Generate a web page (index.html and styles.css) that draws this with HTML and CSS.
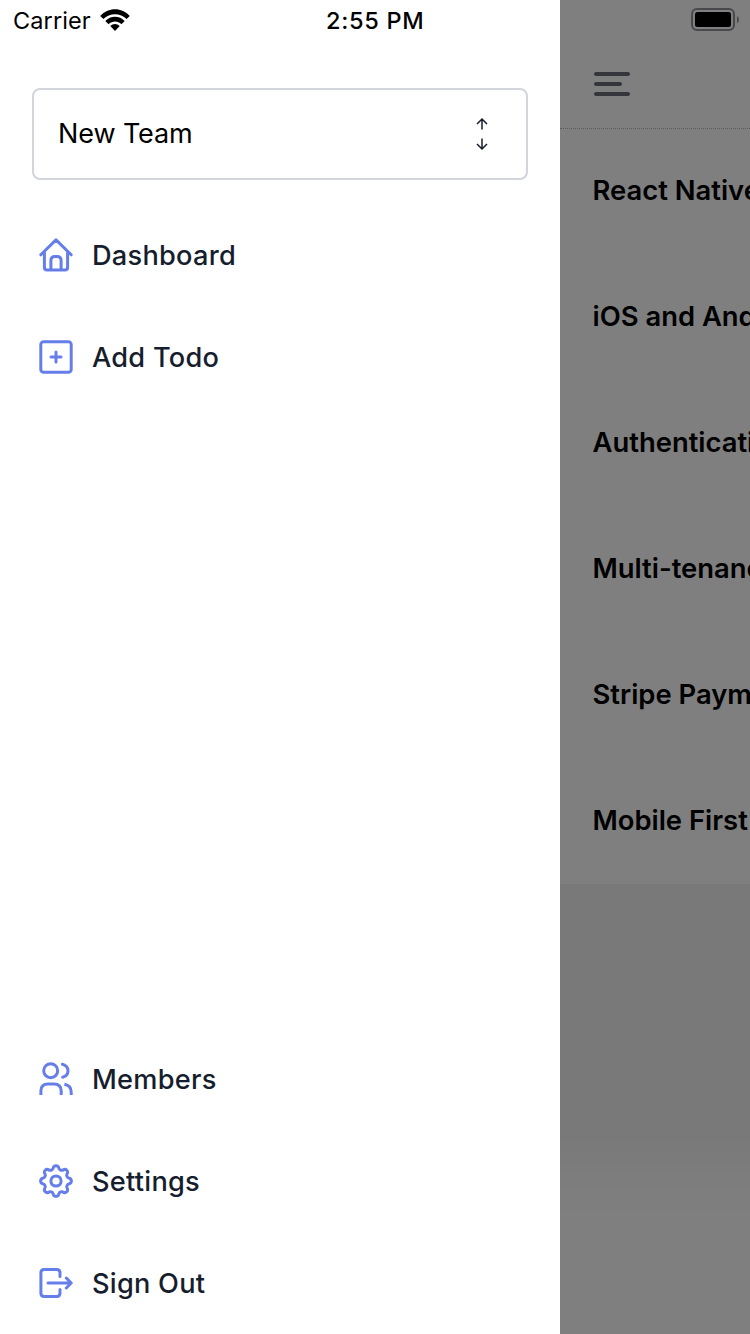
FILE: index.html
```html
<!DOCTYPE html>
<html lang="en">
<head>
    <meta charset="UTF-8">
    <meta name="viewport" content="width=device-width, initial-scale=1.0">
    <title>Dashboard</title>
    <link rel="stylesheet" href="styles.css">
</head>
<body>
    <div class="app">
        <aside class="drawer">
            <div class="status-bar">
                <span class="carrier">Carrier</span>
                <svg class="wifi" width="30" height="22" viewBox="0 0 30 22">
                    <path d="M0.2 7C8 -2 22 -2 29.8 7L26.6 10.1C20.4 3.5 9.6 3.5 3.4 10.1Z"/>
                    <path d="M5.3 12C10.4 6.2 19.6 6.2 24.7 12L21.4 15.2C18 11.5 12 11.5 8.6 15.2Z"/>
                    <path d="M10.3 17C13 14.2 17 14.2 19.7 17L15 21.9Z"/>
                </svg>
                <span class="time">2:55 PM</span>
            </div>

            <div class="team-select">
                <span class="team-name">New Team</span>
                <svg width="16" height="34" viewBox="0 0 16 34">
                    <path d="M8 12.5V2.5M3 7L8 2L13 7M8 21.5V31.5M3 27L8 32L13 27"/>
                </svg>
            </div>

            <nav class="menu">
                <a class="menu-item">
                    <svg class="icon" viewBox="0 0 40 40">
                        <path d="M4.8 19.8L20 4.9L35.2 19.8M8.4 17V32.2Q8.4 35 11.2 35H28.8Q31.6 35 31.6 32.2V17M14.9 35V25.6Q14.9 21.6 18.9 21.6H21.1Q25.1 21.6 25.1 25.6V35"/>
                    </svg>
                    <span>Dashboard</span>
                </a>
                <a class="menu-item">
                    <svg class="icon" viewBox="0 0 40 40">
                        <rect x="4.8" y="4.8" width="30.4" height="30.4" rx="2.8"/>
                        <path d="M20 15V25M15 20H25"/>
                    </svg>
                    <span>Add Todo</span>
                </a>
            </nav>

            <nav class="menu menu-bottom">
                <a class="menu-item">
                    <svg class="icon" viewBox="0 0 40 40">
                        <circle cx="14.7" cy="11.7" r="7"/>
                        <path class="flat" d="M4.9 36V32Q4.9 25 12 25H18Q25.2 25 25.2 32V36"/>
                        <path d="M26.4 5.2C33.8 7.2 33.8 16.2 26.6 18.2"/>
                        <path class="flat" d="M28.4 25.3Q35.2 26.6 35.2 33V36"/>
                    </svg>
                    <span>Members</span>
                </a>
                <a class="menu-item">
                    <svg class="icon" viewBox="0 0 40 40">
                        <circle cx="20" cy="20" r="5.1"/>
                        <path d="M33.3 17.3A2.8 2.8 0 0 1 33.3 22.7A3.1 3.1 0 0 0 31.3 27.55A2.8 2.8 0 0 1 27.55 31.3A3.1 3.1 0 0 0 22.7 33.3A2.8 2.8 0 0 1 17.3 33.3A3.1 3.1 0 0 0 12.45 31.3A2.8 2.8 0 0 1 8.7 27.55A3.1 3.1 0 0 0 6.7 22.7A2.8 2.8 0 0 1 6.7 17.3A3.1 3.1 0 0 0 8.7 12.45A2.8 2.8 0 0 1 12.45 8.7A3.1 3.1 0 0 0 17.3 6.7A2.8 2.8 0 0 1 22.7 6.7A3.1 3.1 0 0 0 27.55 8.7A2.8 2.8 0 0 1 31.3 12.45A3.1 3.1 0 0 0 33.3 17.3Z"/>
                    </svg>
                    <span>Settings</span>
                </a>
                <a class="menu-item">
                    <svg class="icon" viewBox="0 0 40 40">
                        <path d="M24 13.5V9.8Q24 6.5 20.7 6.5H8.2Q4.9 6.5 4.9 9.8V30.2Q4.9 33.5 8.2 33.5H20.7Q24 33.5 24 30.2V26.5M12 20H35M30.3 15L35.2 20L30.3 25"/>
                    </svg>
                    <span>Sign Out</span>
                </a>
            </nav>
        </aside>

        <main class="screen">
            <header class="screen-header">
                <svg class="battery" width="48" height="24" viewBox="0 0 48 24">
                    <rect class="battery-case" x="1" y="1" width="42" height="21" rx="5"/>
                    <rect x="4" y="4" width="36" height="15" rx="2.5"/>
                    <path class="battery-tip" d="M46 8Q48 9 48 11.5Q48 14 46 15Z"/>
                </svg>
                <svg class="hamburger" width="36" height="24" viewBox="0 0 36 24">
                    <path d="M2 2H34M2 12H26M2 22H34"/>
                </svg>
            </header>
            <ul class="todos">
                <li>React Native</li>
                <li>iOS and Android</li>
                <li>Authentication</li>
                <li>Multi-tenancy</li>
                <li>Stripe Payments</li>
                <li>Mobile First</li>
            </ul>
            <div class="overlay"></div>
        </main>
    </div>
</body>
</html>
```
FILE: styles.css
```css
body {
    margin: 0;
    font-family: Inter, "Liberation Sans", sans-serif;
    color: #161e2e;
}
.app {
    display: flex;
    width: 750px;
    height: 1334px;
    overflow: hidden;
}

/* Drawer */
.drawer {
    display: flex;
    flex-direction: column;
    flex: 0 0 560px;
    background-color: #ffffff;
}
.status-bar {
    display: grid;
    grid-template-columns: 87px 226px auto;
    align-items: center;
    height: 40px;
    padding-left: 13px;
    font-size: 23.5px;
    color: #000000;
}
.carrier {
    letter-spacing: 0.1px;
}
.time {
    font-weight: 500;
    letter-spacing: 0.7px;
}
.team-select {
    display: flex;
    align-items: center;
    justify-content: space-between;
    box-sizing: border-box;
    height: 92px;
    margin: 48px 32px 24px;
    padding: 0 36px 0 24px;
    border: 2px solid #d2d6dc;
    border-radius: 8px;
    font-size: 27px;
    color: #000000;
}
.team-name {
    padding-bottom: 2px;
    letter-spacing: -0.1px;
}
.team-select svg {
    fill: none;
    stroke: #161e2e;
    stroke-width: 1.5;
}
.menu-bottom {
    margin-top: auto;
}
.menu-item {
    display: flex;
    align-items: center;
    gap: 16px;
    height: 102px;
    padding-left: 36px;
    font-size: 27.2px;
    font-weight: 500;
    letter-spacing: 0.25px;
}
.icon {
    width: 40px;
    height: 40px;
    fill: none;
    stroke: #667eea;
    stroke-width: 3;
    stroke-linecap: round;
    stroke-linejoin: round;
}
.icon .flat {
    stroke-linecap: butt;
}

/* Screen behind the drawer */
.screen {
    position: relative;
    flex: 1;
    overflow: hidden;
    background: linear-gradient(#f3f3f3 1140px, #fbfbfb 1180px, #ffffff 1228px);
}
.screen-header {
    display: flex;
    flex-direction: column;
    box-sizing: border-box;
    height: 128px;
    padding: 8px 11px 0 34px;
    background-color: #ffffff;
}
.battery {
    align-self: flex-end;
    margin-bottom: 40px;
}
.battery-case {
    fill: none;
    stroke: #92929a;
    stroke-width: 2;
}
.battery-tip {
    fill: #92929a;
}
.hamburger {
    fill: none;
    stroke: #6b6b78;
    stroke-width: 4;
    stroke-linecap: round;
}
.todos {
    margin: 0;
    padding: 0;
    list-style: none;
    background-color: #ffffff;
}
.todos li {
    display: flex;
    align-items: center;
    box-sizing: border-box;
    height: 126px;
    padding: 0 0 2px 32.5px;
    font-size: 27.4px;
    font-weight: 600;
    white-space: nowrap;
    color: #000000;
}
.todos li:first-child {
    padding-bottom: 3px;
    border-top: 1px dotted #b8b8b8;
}
.overlay {
    position: absolute;
    inset: 0;
    background-color: rgba(0, 0, 0, 0.5);
}
```
